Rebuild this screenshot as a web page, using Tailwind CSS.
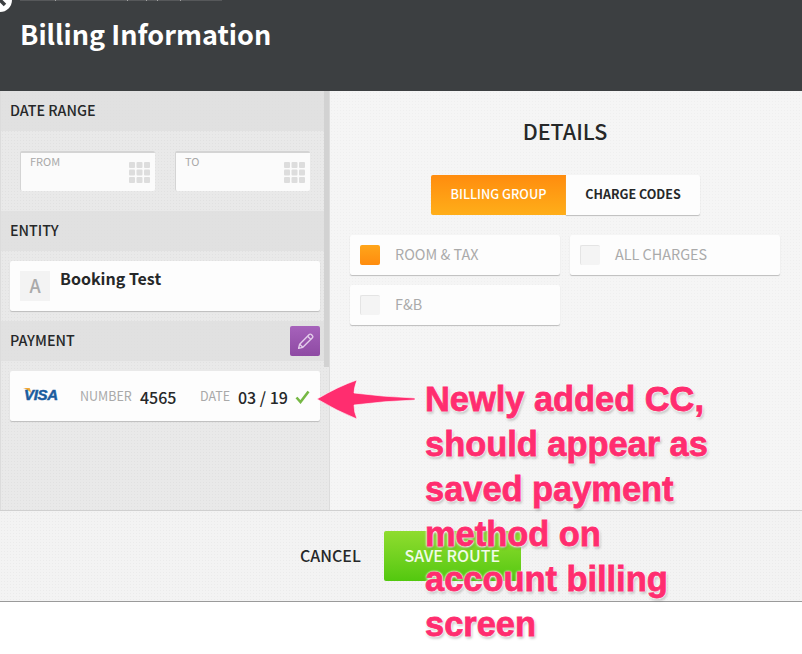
<!DOCTYPE html>
<html>
<head>
<meta charset="utf-8">
<script src="https://cdn.jsdelivr.net/npm/@tailwindcss/browser@4"></script>
</head>
<body class="m-0 bg-white">
<div class="relative w-[802px] h-[654px] overflow-hidden bg-white font-['Noto_Sans_CJK_SC','Noto_Sans',sans-serif] text-[#262829]">
  <div class="flex flex-col h-[602px] border-b border-[#9a9a9a]">
    <header class="relative h-[91px] shrink-0 bg-[#3c3f41] overflow-hidden">
      <div class="absolute left-[20px] top-0 w-[202px] h-px bg-[#56585a]"></div>
      <div class="absolute left-[55px] top-0 w-px h-px bg-[#a0a0a0]"></div>
      <div class="absolute left-[127px] top-0 w-px h-px bg-[#a0a0a0]"></div>
      <div class="absolute left-[146px] top-0 w-px h-px bg-[#a0a0a0]"></div>
      <div class="absolute left-[157px] top-0 w-px h-px bg-[#a0a0a0]"></div>
      <div class="absolute left-[180px] top-0 w-px h-px bg-[#a0a0a0]"></div>
      <svg class="absolute left-[-12px] top-[-12px]" width="26" height="26" viewBox="0 0 26 26"><circle cx="12" cy="12" r="12" fill="#fff"/><path d="M7 7l10 10M17 7L7 17" stroke="#3c3f41" stroke-width="3.500"/></svg>
      <h1 class="absolute left-[20px] top-[14px] text-[27px] leading-[40px] font-bold text-white">Billing Information</h1>
    </header>
    <main class="flex flex-1 min-h-0">
      <aside class="relative w-[330px] shrink-0 bg-[#e9e9e9] bg-[radial-gradient(rgba(0,0,0,0.035)_1px,transparent_1px)] bg-[size:3px_3px] border-x border-[#dcdcdc]">
        <div class="absolute left-[323px] top-0 w-[5px] h-[276px] bg-[#d2d2d2]"></div>
        <div class="h-[40px] bg-[#dedede]/80 pl-[9px] pb-[2px] flex items-center text-[14.300px] font-medium">DATE RANGE</div>
        <div class="h-[80px] pl-[19px] pt-[20px] flex gap-[20px]">
          <div class="relative w-[135px] h-[40px] bg-[#fbfbfb] rounded-[2px] border-t-2 border-l border-[#d4d4d4] pl-[9px] text-[11px] leading-[16px] text-[#a9a9a9]">FROM
            <svg class="absolute right-[5px] top-[9px]" width="21" height="21" viewBox="0 0 21 21" fill="#dddddd"><rect x="0" y="0" width="6" height="6" rx="1"/><rect x="7.500" y="0" width="6" height="6" rx="1"/><rect x="15" y="0" width="6" height="6" rx="1"/><rect x="0" y="7.500" width="6" height="6" rx="1"/><rect x="7.500" y="7.500" width="6" height="6" rx="1"/><rect x="15" y="7.500" width="6" height="6" rx="1"/><rect x="0" y="15" width="6" height="6" rx="1"/><rect x="7.500" y="15" width="6" height="6" rx="1"/><rect x="15" y="15" width="6" height="6" rx="1"/></svg>
          </div>
          <div class="relative w-[135px] h-[40px] bg-[#fbfbfb] rounded-[2px] border-t-2 border-l border-[#d4d4d4] pl-[9px] text-[11px] leading-[16px] text-[#a9a9a9]">TO
            <svg class="absolute right-[5px] top-[9px]" width="21" height="21" viewBox="0 0 21 21" fill="#dddddd"><rect x="0" y="0" width="6" height="6" rx="1"/><rect x="7.500" y="0" width="6" height="6" rx="1"/><rect x="15" y="0" width="6" height="6" rx="1"/><rect x="0" y="7.500" width="6" height="6" rx="1"/><rect x="7.500" y="7.500" width="6" height="6" rx="1"/><rect x="15" y="7.500" width="6" height="6" rx="1"/><rect x="0" y="15" width="6" height="6" rx="1"/><rect x="7.500" y="15" width="6" height="6" rx="1"/><rect x="15" y="15" width="6" height="6" rx="1"/></svg>
          </div>
        </div>
        <div class="h-[40px] bg-[#dedede]/80 pl-[9px] pb-[3px] flex items-center text-[14.300px] font-medium">ENTITY</div>
        <div class="h-[70px] pl-[9px] pt-[10px]">
          <div class="w-[310px] h-[50px] bg-[#fdfdfd] rounded-[2px] shadow-[0_1px_1px_#bdbdbd] pl-[10px] pt-[10px] flex gap-[10px]">
            <div class="w-[30px] h-[30px] bg-[#f3f3f3] flex items-center justify-center pb-[2px] text-[18px] font-medium text-[#aaaaaa]">A</div>
            <div class="text-[16px] leading-[15px] font-bold">Booking Test</div>
          </div>
        </div>
        <div class="h-[40px] bg-[#dedede]/80 pl-[9px] pr-[9px] flex items-center justify-between text-[14.300px] font-medium"><span class="pb-[3px]">PAYMENT</span>
          <div class="w-[30px] h-[30px] rounded-[2px] bg-gradient-to-b from-[#a662bb] to-[#8e4aa3] flex items-center justify-center">
            <svg width="17" height="17" viewBox="0 0 16 16" fill="none" stroke="#e3cdea" stroke-width="1.300" stroke-linejoin="round"><path d="M1.500 14.500l1-4L11.500 1.500a1.400 1.400 0 0 1 2 0l1 1a1.400 1.400 0 0 1 0 2L5.500 13.500z"/><path d="M2.500 10.500l3 3M10 3l3 3"/></svg>
          </div>
        </div>
        <div class="pl-[9px] pt-[10px]">
          <div class="w-[310px] h-[50px] bg-[#fdfdfd] rounded-[2px] shadow-[0_1px_1px_#bdbdbd] flex items-center relative">
            <svg class="absolute left-[13px] top-[17px]" width="8" height="6" viewBox="0 0 8 6"><path d="M0 0h6c1 0 1.500 1 2 5C6 2.500 3 1 0 0z" fill="#f2a735"/></svg>
            <span class="absolute left-[14px] top-[14px] text-[15px] leading-[20px] italic font-bold text-[#1a5c9e] tracking-[-0.3px] font-['Liberation_Sans',sans-serif] [-webkit-text-stroke:0.5px_#1a5c9e]">VISA</span>
            <span class="absolute left-[70px] top-[16px] text-[12.500px] leading-[18px] text-[#a9a9a9]">NUMBER</span>
            <span class="absolute left-[130px] top-[14px] text-[16px] leading-[24px] font-medium">4565</span>
            <span class="absolute left-[190px] top-[16px] text-[12.500px] leading-[18px] text-[#a9a9a9]">DATE</span>
            <span class="absolute left-[228px] top-[14px] text-[16px] leading-[24px] font-medium">03 / 19</span>
            <svg class="absolute left-[285px] top-[19px]" width="15" height="14" viewBox="0 0 15 14" fill="none" stroke="#76b845" stroke-width="2.600"><path d="M1.500 7.500l4 4.500L13.500 1.500"/></svg>
          </div>
        </div>
      </aside>
      <section class="flex-1 bg-[#f5f5f5] bg-[radial-gradient(rgba(0,0,0,0.025)_1px,transparent_1px)] bg-[size:3px_3px] relative">
        <h2 class="text-center text-[21.500px] leading-[30px] font-medium mt-[25px] pr-[2px]">DETAILS</h2>
        <div class="flex mt-[29px] ml-[101px]">
          <div class="w-[135px] h-[40px] rounded-l-[2px] bg-gradient-to-b from-[#ff8c0e] to-[#ffae19] flex items-center justify-center pb-[2px] text-[12.700px] font-medium text-white">BILLING GROUP</div>
          <div class="w-[134px] h-[40px] rounded-r-[2px] bg-[#fdfdfd] shadow-[0_1px_1px_#bdbdbd] flex items-center justify-center pb-[2px] text-[12.500px] font-bold">CHARGE CODES</div>
        </div>
        <div class="grid grid-cols-[210px_210px] gap-x-[10px] gap-y-[10px] mt-[20px] ml-[20px]">
          <div class="h-[40px] bg-[#fdfdfd] rounded-[2px] shadow-[0_1px_1px_#bdbdbd] flex items-center pl-[10px] gap-[15px] text-[14.400px] text-[#aaaaaa]"><span class="w-[20px] h-[20px] rounded-[2px] bg-gradient-to-b from-[#ffa51a] to-[#ff8c0e]"></span><span class="pb-[3px]">ROOM &amp; TAX</span></div>
          <div class="h-[40px] bg-[#fdfdfd] rounded-[2px] shadow-[0_1px_1px_#bdbdbd] flex items-center pl-[10px] gap-[15px] text-[14.400px] text-[#aaaaaa]"><span class="w-[20px] h-[20px] rounded-[2px] bg-[#f4f4f4] border-l border-t border-[#e4e4e4]"></span><span class="pb-[3px]">ALL CHARGES</span></div>
          <div class="h-[40px] bg-[#fdfdfd] rounded-[2px] shadow-[0_1px_1px_#bdbdbd] flex items-center pl-[10px] gap-[15px] text-[14.400px] text-[#aaaaaa]"><span class="w-[20px] h-[20px] rounded-[2px] bg-[#f4f4f4] border-l border-t border-[#e4e4e4]"></span><span class="pb-[3px]">F&amp;B</span></div>
        </div>
      </section>
    </main>
    <footer class="h-[91px] shrink-0 bg-[#f3f3f3] bg-[radial-gradient(rgba(0,0,0,0.03)_1px,transparent_1px)] bg-[size:3px_3px] border-t border-[#d0d0d0] flex items-center pl-[300px] gap-[23.500px]">
      <span class="text-[16px] font-medium pb-[3px]">CANCEL</span>
      <div class="w-[137px] h-[50px] rounded-[2px] bg-gradient-to-b from-[#8fdc2e] to-[#52c80e] flex items-center pl-[20px] pb-[3px] text-[16px] font-medium text-white/90">SAVE ROUTE</div>
    </footer>
  </div>
  <svg class="absolute left-[315px] top-[375px]" width="105" height="46" viewBox="0 0 105 46"><path d="M2 24Q24 11 42 5Q39 13 39 18Q70 22 100 23L100 25Q70 26 39 30Q39 37 42 44Q22 36 2 24z" fill="#ff2d6f" stroke="#fff" stroke-opacity=".6" stroke-width="1"/></svg>
  <div class="absolute left-[425px] top-[377px] w-[300px] text-[34.400px] leading-[45px] font-bold text-[#ff2d6f] font-['Liberation_Sans',sans-serif] [text-shadow:0_0_2px_#fff,0_0_2px_#fff,0_0_3px_#fff,0_1px_3px_#fff,1px_2px_3px_rgba(0,0,0,0.4)] [-webkit-text-stroke:0.8px_#ff2d6f]">
    <div>Newly added CC,</div><div>should appear as</div><div>saved payment</div><div>method on</div><div>account billing</div><div>screen</div>
  </div>
</div>
</body>
</html>
